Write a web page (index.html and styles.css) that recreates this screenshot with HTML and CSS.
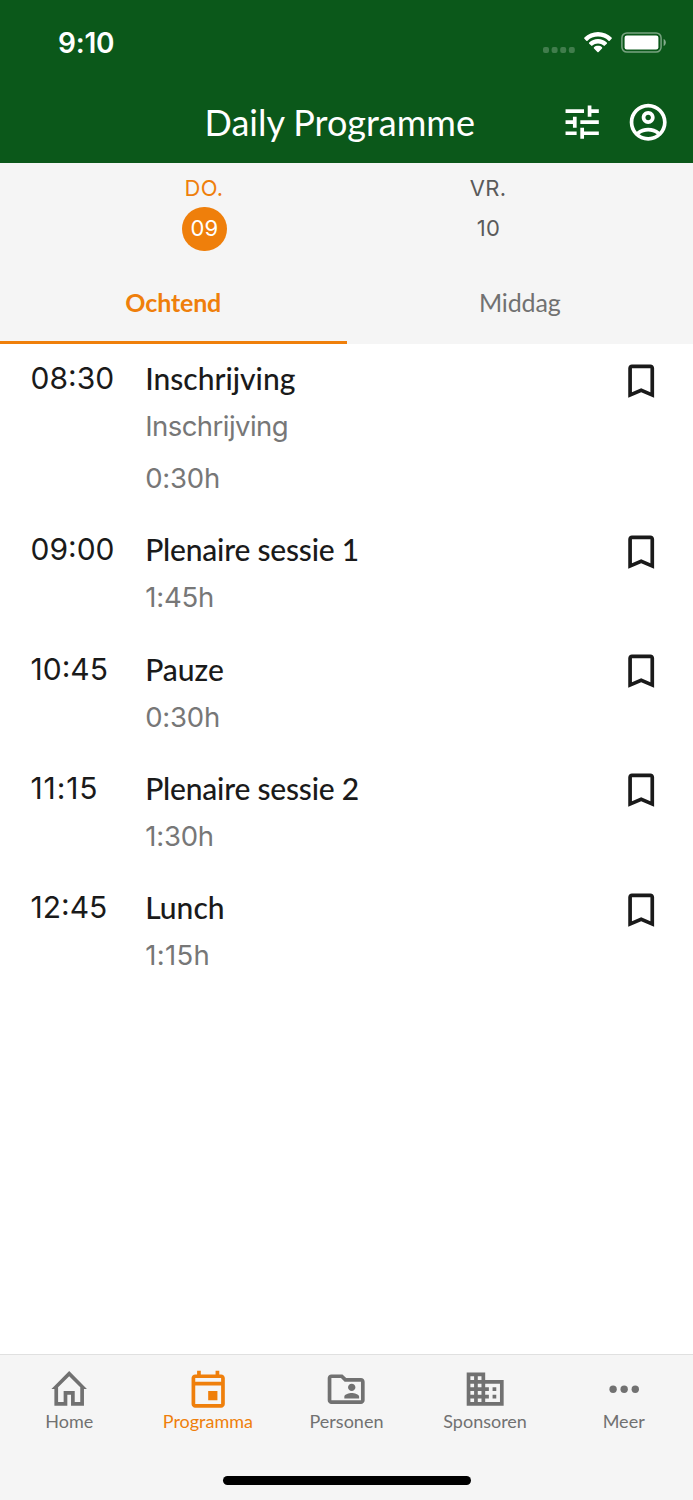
FILE: index.html
```html
<!DOCTYPE html>
<html lang="nl">
<head>
<meta charset="utf-8">
<title>Daily Programme</title>
<link rel="stylesheet" href="styles.css">
</head>
<body>
<svg class="defs" aria-hidden="true">
  <symbol id="bookmark" viewBox="0 0 24 24"><path d="M17 3H7c-1.1 0-2 .9-2 2v16l7-3 7 3V5c0-1.1-.9-2-2-2zm0 15l-5-2.18L7 18V5h10v13z"/></symbol>
</svg>
<div class="app">
  <header class="header">
    <div class="status">
      <span class="clock">9:10</span>
      <div class="indicators">
        <svg class="signal" viewBox="0 0 32 6"><rect width="6" height="6" rx="2"/><rect x="8.6" width="6" height="6" rx="2"/><rect x="17.2" width="6" height="6" rx="2"/><rect x="25.8" width="6" height="6" rx="2"/></svg>
        <svg class="wifi" viewBox="0 0 28 21"><path d="M14 0C8.7 0 3.9 2.1.4 5.5c-.4.4-.4.9 0 1.3l1.9 1.9c.4.4.9.4 1.2 0C6.3 6 10 4.6 14 4.6s7.7 1.4 10.5 4.1c.3.4.8.4 1.2 0l1.9-1.9c.4-.4.4-.9 0-1.3C24.1 2.1 19.3 0 14 0z"/><path d="M14 6.9c-3.4 0-6.5 1.3-8.800 3.500-.4.4-.4.9 0 1.300l2 1.900c.3.4.8.4 1.200 0C9.900 12.200 11.900 11.500 14 11.500s4.100.7 5.600 2.100c.4.4.9.4 1.200 0l2-1.900c.4-.4.4-.9 0-1.300-2.300-2.200-5.400-3.500-8.800-3.500z"/><path d="M14 13.800c-1.500 0-2.900.5-4 1.400-.4.4-.4.9 0 1.300l3.400 3.500c.4.4.8.4 1.200 0l3.400-3.500c.4-.4.4-.9 0-1.300-1.100-.9-2.500-1.400-4-1.400z"/></svg>
        <svg class="battery" viewBox="0 0 46 21"><rect x=".9" y=".9" width="39.2" height="19.2" rx="5" fill="none" stroke="#fff" stroke-opacity=".45" stroke-width="1.5"/><rect x="3.6" y="3.6" width="33.8" height="13.8" rx="2.2"/><path d="M42.600 7c3 1.200 3 5.800 0 7z" opacity=".5"/></svg>
      </div>
    </div>
    <div class="toolbar">
      <h1 class="title">Daily Programme</h1>
      <div class="actions">
        <svg class="icon" viewBox="0 0 24 24"><path d="M3 17v2h6v-2H3zM3 5v2h10V5H3zm10 16v-2h8v-2h-8v-2h-2v6h2zM7 9v2H3v2h4v2h2V9H7zm14 4v-2H11v2h10zm-6-4h2V7h4V5h-4V3h-2v6z"/></svg>
        <svg class="icon" viewBox="0 0 24 24"><path d="M12 2C6.480 2 2 6.480 2 12s4.480 10 10 10 10-4.480 10-10S17.520 2 12 2zM7.350 18.500C8.660 17.560 10.260 17 12 17s3.340.560 4.650 1.500C15.340 19.440 13.740 20 12 20s-3.340-.560-4.650-1.500zm10.790-1.380C16.450 15.800 14.320 15 12 15s-4.450.800-6.140 2.120C4.700 15.730 4 13.950 4 12c0-4.420 3.580-8 8-8s8 3.580 8 8c0 1.950-.700 3.730-1.860 5.120zM12 6c-1.930 0-3.500 1.570-3.500 3.500S10.070 13 12 13s3.500-1.570 3.500-3.500S13.930 6 12 6zm0 5c-.830 0-1.500-.670-1.500-1.500S11.170 8 12 8s1.500.670 1.500 1.500S12.830 11 12 11z"/></svg>
      </div>
    </div>
  </header>

  <section class="days">
    <div class="day active"><span class="day-name">DO.</span><span class="day-number">09</span></div>
    <div class="day"><span class="day-name">VR.</span><span class="day-number">10</span></div>
  </section>
  <nav class="parts">
    <span class="part active">Ochtend</span>
    <span class="part">Middag</span>
  </nav>

  <main class="sessions">
    <article class="session">
      <time class="start">08:30</time>
      <div class="details"><h2 class="name">Inschrijving</h2><p class="meta type">Inschrijving</p><p class="meta">0:30h</p></div>
      <svg class="icon"><use href="#bookmark"/></svg>
    </article>
    <article class="session">
      <time class="start">09:00</time>
      <div class="details"><h2 class="name numbered">Plenaire sessie 1</h2><p class="meta">1:45h</p></div>
      <svg class="icon"><use href="#bookmark"/></svg>
    </article>
    <article class="session">
      <time class="start">10:45</time>
      <div class="details"><h2 class="name">Pauze</h2><p class="meta">0:30h</p></div>
      <svg class="icon"><use href="#bookmark"/></svg>
    </article>
    <article class="session">
      <time class="start narrow">11:15</time>
      <div class="details"><h2 class="name numbered">Plenaire sessie 2</h2><p class="meta">1:30h</p></div>
      <svg class="icon"><use href="#bookmark"/></svg>
    </article>
    <article class="session">
      <time class="start">12:45</time>
      <div class="details"><h2 class="name">Lunch</h2><p class="meta narrow">1:15h</p></div>
      <svg class="icon"><use href="#bookmark"/></svg>
    </article>
  </main>

  <footer class="footer">
    <nav class="tabs">
      <a class="tab"><svg class="icon" viewBox="0 0 24 24"><path fill-rule="evenodd" d="M12 2.200L21.600 11.900H20V21h-7v-6h-2v6H4v-9.100H2.400zM12 5l-6 6v8h3v-6h6v6h3v-8z"/></svg><span>Home</span></a>
      <a class="tab active"><svg class="icon" viewBox="0 0 24 24"><path d="M19 4h-1V2h-2v2H8V2H6v2H5c-1.100 0-2 .9-2 2v14c0 1.100.9 2 2 2h14c1.100 0 2-.9 2-2V6c0-1.100-.9-2-2-2zm0 16H5V10h14v10zm0-12H5V6h14v2zm-7 5h5v5h-5z"/></svg><span>Programma</span></a>
      <a class="tab"><svg class="icon" viewBox="0 0 24 24"><path d="M20 6h-8l-2-2H4c-1.100 0-2 .9-2 2v12c0 1.100.9 2 2 2h16c1.100 0 2-.9 2-2V8c0-1.100-.9-2-2-2zm0 12H4V6h5.170l2 2H20v10zM15 13c1.100 0 2-.9 2-2s-.9-2-2-2-2 .9-2 2 .9 2 2 2zm-4 4h8v-1c0-1.330-2.670-2-4-2s-4 .670-4 2v1z"/></svg><span>Personen</span></a>
      <a class="tab"><svg class="icon" viewBox="0 0 24 24"><path d="M12 7V3H2v18h20V7H12zM6 19H4v-2h2v2zm0-4H4v-2h2v2zm0-4H4V9h2v2zm0-4H4V5h2v2zm4 12H8v-2h2v2zm0-4H8v-2h2v2zm0-4H8V9h2v2zm0-4H8V5h2v2zm10 12h-8v-2h2v-2h-2v-2h2v-2h-2V9h8v10zm-2-8h-2v2h2v-2zm0 4h-2v2h2v-2z"/></svg><span>Sponsoren</span></a>
      <a class="tab"><svg class="icon" viewBox="0 0 24 24"><circle cx="6" cy="12" r="2"/><circle cx="12" cy="12" r="2"/><circle cx="18" cy="12" r="2"/></svg><span>Meer</span></a>
    </nav>
    <div class="home-indicator"></div>
  </footer>
</div>
</body>
</html>
```
FILE: styles.css
```css
* { box-sizing: border-box; }
body { margin: 0; background: #fff; font-family: Inter, sans-serif; color: #1a1a1a; }
h1, h2, p { margin: 0; font-weight: 400; }
.defs { display: none; }
svg { display: block; fill: currentColor; }
.icon { width: 44.36px; height: 44.36px; flex: none; }
.app { height: 1500px; display: flex; flex-direction: column; }

.header { height: 162.6px; background: #0b581a; color: #fff; }
.status { height: 82px; padding: 3px 26px 0 58px; display: flex; align-items: center; justify-content: space-between; }
.clock { font-size: 28px; font-weight: 600; line-height: 32px; letter-spacing: -.2px; }
.indicators { display: flex; align-items: center; }
.signal { width: 32px; height: 6px; opacity: .22; margin: 14px 9px 0 0; }
.wifi { width: 28px; height: 21px; margin-right: 9px; }
.battery { width: 46px; height: 21px; }
.toolbar { height: 80px; padding: 0 22.5px 0 204.5px; display: flex; align-items: center; justify-content: space-between; }
.title { font: 400 36px/44px Lato, sans-serif; white-space: nowrap; }
.actions { display: flex; gap: 22px; }

.days { height: 99px; background: #f5f5f5; padding: 12px 62.5px 0; display: grid; grid-template-columns: 1fr 1fr; color: #5a5a5a; }
.day { display: flex; flex-direction: column; align-items: center; font-size: 22px; line-height: 27px; }
.day-name { letter-spacing: .3px; margin-right: 1px; }
.day-number { width: 44.4px; height: 44.4px; line-height: 43px; margin-top: 5px; border-radius: 50%; text-align: center; letter-spacing: .3px; }
.day.active { color: #ef7f0b; }
.day.active .day-number { background: #ef7f0b; color: #fff; }
.parts { height: 82.2px; background: #f5f5f5; display: grid; grid-template-columns: 1fr 1fr; }
.part { height: 82.2px; text-align: center; font: 400 25px/78px Lato, sans-serif; color: #717171; padding-top: 1px; border-bottom: 3.7px solid transparent; letter-spacing: -.15px; }
.part.active { color: #ef7f0b; font-weight: 700; border-bottom-color: #ef7f0b; }

.sessions { flex: 1; }
.session { display: grid; grid-template-columns: 114.7px 1fr 44.36px; padding: 14.7px 29.8px 18.7px 30.5px; }
.session .icon { margin-top: .5px; }
.start { font-size: 30px; line-height: 40px; }
.start.narrow { letter-spacing: .9px; }
.name { font: 500 30px/41px Lato, sans-serif; white-space: nowrap; }
.name.numbered { letter-spacing: -.2px; }
.meta { font-size: 27.5px; line-height: 36px; color: #777; margin-top: 9px; letter-spacing: -.2px; }
.meta.narrow { letter-spacing: .3px; }
.meta.type { letter-spacing: -.55px; margin-bottom: 15.3px; }

.footer { height: 146px; border-top: 1px solid #e0e0e0; background: #f5f5f5; display: flex; flex-direction: column; align-items: center; }
.tabs { width: 100%; display: grid; grid-template-columns: repeat(5, 1fr); padding-top: 12px; height: 121px; }
.tab { display: flex; flex-direction: column; align-items: center; color: #717171; font: 400 18px/21px Lato, sans-serif; }
.tab.active { color: #ef7f0b; }
.home-indicator { width: 248px; height: 9px; border-radius: 5px; background: #000; }
```
